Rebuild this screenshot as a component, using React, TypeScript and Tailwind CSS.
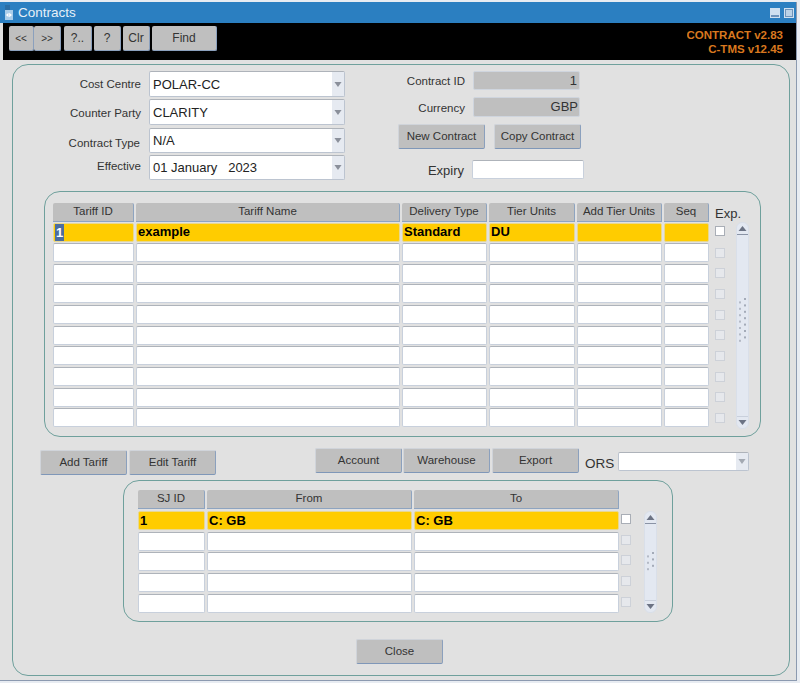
const tariffCols = ["Tariff ID", "Tariff Name", "Delivery Type", "Tier Units", "Add Tier Units", "Seq"];
const tariffGrid = "grid grid-cols-[83px_266px_87px_88px_87px_47px]";
const sjCols = ["SJ ID", "From", "To"];
const sjGrid = "grid grid-cols-[69px_207px_207px]";

const btn =
  "h-[25px] w-[87px] bg-[#bfbfbf] rounded-[2px] border border-[#d0d4da] border-r-[#8ba0bd] border-b-[#7f97b8] text-[11.5px] text-[#333] flex items-center justify-center";
const toolBtn =
  "h-[25px] bg-[#bfbfbf] rounded-[2px] border-r border-b border-[#8ba0bd] flex items-center justify-center";

const Arrow = ({ dir, color, w = 9 }: { dir: "up" | "down"; color: string; w?: number }) => (
  <svg width={w} height="5" viewBox="0 0 9 5" preserveAspectRatio="none" className="block">
    <path d={dir === "up" ? "M0.5 5 L4.5 0 L8.5 5 Z" : "M0.5 0 L8.5 0 L4.5 5 Z"} fill={color} />
  </svg>
);

const Combo = ({ value, h = "h-[26px]", w = "w-[196px]", arrow = "#8b909b", textCls = "mt-[1px]" }: { value: string; h?: string; w?: string; arrow?: string; textCls?: string }) => (
  <div className={`${h} ${w} bg-white rounded-[2px] border border-[#bcc4d0] border-t-[#aeb3ba] flex items-center justify-between pl-[3px] text-[13px] text-[#222]`}>
    <span className={`whitespace-pre ${textCls}`}>{value}</span>
    <span className="h-full w-[12px] bg-[#e6eaf1] flex items-center justify-center">
      <Arrow dir="down" color={arrow} w={8} />
    </span>
  </div>
);

const Label = ({ text, cls = "" }: { text: string; cls?: string }) => (
  <span className={`text-[11.5px] text-[#333] text-right whitespace-nowrap ${cls}`}>{text}</span>
);

const HeadCell = ({ text }: { text: string }) => (
  <div className="h-[19px] mr-[2px] bg-[#bfbfbf] rounded-t-[2px] border-b border-r border-[#8ea4c0] flex items-center justify-center text-[11.5px] text-[#333] whitespace-nowrap">
    {text}
  </div>
);

const Cell = ({ text, active, mark }: { text?: string; active?: boolean; mark?: boolean }) => (
  <div
    className={`h-[19px] mr-[2px] rounded-[2px] border flex items-center pl-[1px] text-[13px] font-bold text-black overflow-hidden ${
      active ? "bg-[#ffcc00] border-[#e8d890]" : "bg-white border-[#c8d0dc] border-t-[#aeb3ba]"
    }`}
  >
    {mark ? <span className="bg-[#4c6ea0] text-white px-[1px] leading-[17px] font-bold">{text}</span> : text}
  </div>
);

const Check = ({ on }: { on?: boolean }) => (
  <div className={`w-[10px] h-[10px] border ${on ? "bg-white border-[#a9aeb6]" : "bg-[#e6e8ec] border-[#cdd1d8]"}`} />
);

const Grip = ({ pairs }: { pairs: number }) => (
  <svg width="9" height={pairs * 6.4} viewBox={`0 0 9 ${pairs * 6.4}`} className="block">
    {Array.from({ length: pairs }).map((_, i) => (
      <g key={i}>
        <rect x="6" y={i * 6.4} width="2" height="2" fill="#a4abb8" />
        <rect x="1" y={i * 6.4 + 3.4} width="2" height="2" fill="#b4bac6" />
      </g>
    ))}
  </svg>
);

const Scrollbar = ({ h, pairs, gripTop }: { h: string; pairs: number; gripTop: string }) => (
  <div className={`${h} w-[13px] bg-[#e3e8f1] rounded-[6px] border border-[#d9dfe9] flex flex-col items-center`}>
    <div className="h-[12px] w-full border-b border-[#8a93a5] flex items-center justify-center shrink-0">
      <Arrow dir="up" color="#6c7384" />
    </div>
    <div className={`flex-1 ${gripTop}`}>
      <Grip pairs={pairs} />
    </div>
    <div className="h-[12px] w-full border-t border-[#c9d0dc] flex items-center justify-center shrink-0">
      <Arrow dir="down" color="#6c7384" />
    </div>
  </div>
);

export default function App() {
  const tariffRows = Array.from({ length: 9 });
  const sjRows = Array.from({ length: 4 });

  return (
    <div className="w-[800px] h-[683px] bg-[#e8ecf2] pt-[2px] overflow-hidden font-['Liberation_Sans',Arial,sans-serif]">
      <div className="w-[797px] h-[679px] bg-[#e1e1e1] border-r border-b border-[#8c9ab0]">
        {/* title bar */}
        <div className="h-[21px] bg-[#2b7fc1] flex items-center justify-between pl-[5px] pr-[2px]">
          <div className="flex items-center gap-[5px] pt-[2px]">
            <svg width="8" height="15" viewBox="0 0 8 15" className="block -mt-[2px]">
              <path d="M0 0 H5 V5 H0 Z" fill="#2a6ea6" />
              <rect y="5" width="8" height="10" fill="#a9cdea" />
              <path d="M1 10 L3.5 7.8 V12.2 Z M4.2 7.8 L7 10 L4.2 12.2 Z" fill="#ffffff" />
            </svg>
            <span className="text-[13.5px] text-[#e6f0f8]">Contracts</span>
          </div>
          <div className="flex gap-[4px] pt-[1px]">
            <div className="w-[10px] h-[10px] bg-[#cfe0f0] flex items-end justify-center pb-[1px]">
              <div className="w-[8px] h-[2px] bg-[#6f94bb]" />
            </div>
            <div className="w-[10px] h-[10px] bg-[#cfe0f0] p-[1px] flex">
              <div className="w-full h-full border border-[#6f94bb] bg-[#b9d2e8]" />
            </div>
          </div>
        </div>

        {/* toolbar */}
        <div className="ml-[3px] h-[37px] bg-black flex items-start justify-between pt-[3px] pl-[6px] pr-[13px]">
          <div className="flex text-[12px] text-[#333] pb-[1px]">
            <div className={`${toolBtn} w-[25px] text-[10px]`}>&lt;&lt;</div>
            <div className={`${toolBtn} w-[27px] text-[10px]`}>&gt;&gt;</div>
            <div className={`${toolBtn} w-[28px] ml-[3px]`}>?..</div>
            <div className={`${toolBtn} w-[27px] ml-[2px]`}>?</div>
            <div className={`${toolBtn} w-[27px] ml-[2px]`}>Clr</div>
            <div className={`${toolBtn} w-[65px] ml-[2px]`}>Find</div>
          </div>
          <div className="text-right text-[11.5px] leading-[15px] font-bold text-[#d9781f] pt-[2px]">
            <div className="h-[11px] overflow-hidden">CONTRACT v2.83</div>
            <div className="mt-[3px]">C-TMS v12.45</div>
          </div>
        </div>

        {/* main panel */}
        <div className="ml-[12px] mt-[4px] w-[778px] h-[612px] border border-[#6fa09c] rounded-[16px] pt-[6px]">
          <div className="flex">
            {/* left form */}
            <div className="w-[332px] flex flex-col">
              <div className="flex items-center justify-end gap-[8px] mb-[2px]">
                <Label text="Cost Centre" cls="mt-[2px]" />
                <Combo value="POLAR-CC" />
              </div>
              <div className="flex items-center justify-end gap-[8px] mb-[3px]">
                <Label text="Counter Party" cls="mt-[4px]" />
                <Combo value="CLARITY" />
              </div>
              <div className="flex items-center justify-end gap-[10px] mb-[2px]">
                <Label text="Contract Type" cls="mt-[6px] -mr-[1px]" />
                <Combo value="N/A" h="h-[25px]" />
              </div>
              <div className="flex items-center justify-end gap-[8px]">
                <Label text="Effective" cls="-mt-[2px]" />
                <Combo value="01 January   2023" h="h-[25px]" textCls="" />
              </div>
            </div>

            {/* right form */}
            <div className="w-[240px] flex flex-col items-start">
              <div className="flex items-center h-[19px] w-full">
                <Label text="Contract ID" cls="w-[120px] mt-[3px]" />
                <div className="ml-[8px] w-[107px] h-[19px] bg-[#bfbfbf] rounded-[2px] border border-[#cfd5de] flex items-center justify-end pr-[2px] text-[13px] text-[#333]">1</div>
              </div>
              <div className="flex items-center h-[20px] w-full mt-[7px]">
                <Label text="Currency" cls="w-[120px] mt-[4px]" />
                <div className="ml-[8px] w-[107px] h-[20px] bg-[#bfbfbf] rounded-[2px] border border-[#cfd5de] flex items-center justify-end pr-[1px] text-[13px] text-[#333]">GBP</div>
              </div>
              <div className="flex mt-[7px] ml-[53px] gap-[9px]">
                <div className={btn}>New Contract</div>
                <div className={btn}>Copy Contract</div>
              </div>
              <div className="flex items-center mt-[11px] h-[19px] w-full">
                <span className="w-[119px] mt-[3px] text-right text-[13px] text-[#333]">Expiry</span>
                <div className="ml-[8px] w-[112px] h-[19px] bg-white rounded-[2px] border border-[#c8d0dc] border-t-[#aeb3ba]" />
              </div>
            </div>
          </div>

          {/* tariff panel */}
          <div className="ml-[31px] mt-[11px] w-[717px] h-[246px] border border-[#6fa09c] rounded-[16px] pl-[8px] pt-[11px] flex">
            <div>
              <div className={tariffGrid}>
                {tariffCols.map((c) => (
                  <HeadCell key={c} text={c} />
                ))}
              </div>
              <div className="h-[20.67px] pt-[0.5px]">
                <div className={tariffGrid}>
                  <Cell text="1" active mark />
                  <Cell text="example" active />
                  <Cell text="Standard" active />
                  <Cell text="DU" active />
                  <Cell active />
                  <Cell active />
                </div>
              </div>
              {tariffRows.map((_, i) => (
                <div key={i} className="h-[20.67px] pt-[0.5px]">
                  <div className={tariffGrid}>
                    {tariffCols.map((c) => (
                      <Cell key={c} />
                    ))}
                  </div>
                </div>
              ))}
            </div>
            <div className="ml-[4px] w-[21px]">
              <div className="h-[19px] pt-[3px] text-[13px] text-[#333] flex items-center whitespace-nowrap">Exp.</div>
              <div className="h-[20.67px] pt-[4px]"><Check on /></div>
              {tariffRows.map((_, i) => (
                <div key={i} className="h-[20.67px] pt-[5px]"><Check /></div>
              ))}
            </div>
            <div className="mt-[19px]">
              <Scrollbar h="h-[207px]" pairs={7} gripTop="pt-[63px]" />
            </div>
          </div>

          {/* action row */}
          <div className="flex mt-[10px] ml-[27px] h-[29px]">
            <div className="flex gap-[2px] mt-[3px]">
              <div className={btn}>Add Tariff</div>
              <div className={btn}>Edit Tariff</div>
            </div>
            <div className="flex ml-[99px] mt-[1px]">
              <div className={btn}>Account</div>
              <div className={`${btn} ml-[1px]`}>Warehouse</div>
              <div className={`${btn} ml-[2px]`}>Export</div>
            </div>
            <span className="ml-[6px] mt-[7px] text-[13.5px] text-[#333]">ORS</span>
            <div className="ml-[4px] mt-[5px]">
              <Combo value="" h="h-[19px]" w="w-[131px]" arrow="#a3a9b2" textCls="" />
            </div>
          </div>

          {/* sj panel */}
          <div className="ml-[110px] mt-[4px] w-[550px] h-[142px] border border-[#6fa09c] rounded-[16px] pl-[14px] pt-[9px] flex">
            <div>
              <div className={sjGrid}>
                {sjCols.map((c) => (
                  <HeadCell key={c} text={c} />
                ))}
              </div>
              <div className="h-[20.67px] pt-[2px]">
                <div className={sjGrid}>
                  <Cell text="1" active />
                  <Cell text="C: GB" active />
                  <Cell text="C: GB" active />
                </div>
              </div>
              {sjRows.map((_, i) => (
                <div key={i} className="h-[20.67px] pt-[2px]">
                  <div className={sjGrid}>
                    {sjCols.map((c) => (
                      <Cell key={c} />
                    ))}
                  </div>
                </div>
              ))}
            </div>
            <div className="w-[23px] pt-[19px]">
              <div className="h-[20.67px] pt-[5px]"><Check on /></div>
              {sjRows.map((_, i) => (
                <div key={i} className="h-[20.67px] pt-[5px]"><Check /></div>
              ))}
            </div>
            <div className="mt-[21px]">
              <Scrollbar h="h-[102px]" pairs={3} gripTop="pt-[28px]" />
            </div>
          </div>

          {/* close */}
          <div className="ml-[343px] mt-[17px]">
            <div className={btn}>Close</div>
          </div>
        </div>
      </div>
    </div>
  );
}
